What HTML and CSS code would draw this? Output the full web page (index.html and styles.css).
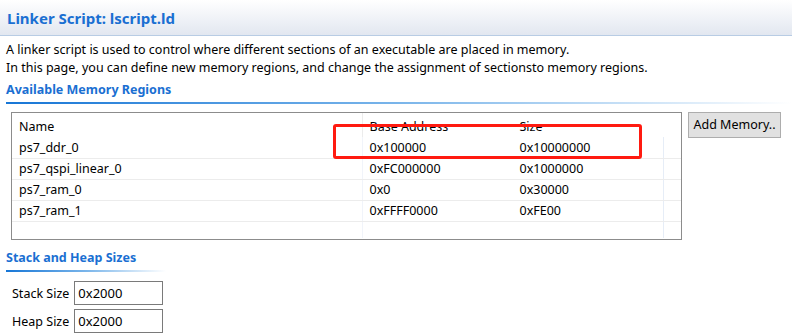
FILE: index.html
```html
<!DOCTYPE html>
<html lang="en">
<head>
    <meta charset="UTF-8">
    <title>Linker Script: lscript.ld</title>
    <link rel="stylesheet" href="styles.css">
</head>
<body>
    <div class="header">
        <h1>Linker Script: lscript.ld</h1>
    </div>

    <div class="content">
        <p class="intro">
            A linker script is used to control where different sections of an executable are placed in memory.<br>
            In this page, you can define new memory regions, and change the assignment of sectionsto memory regions.
        </p>

        <div class="section-title">Available Memory Regions</div>

        <div class="regions">
            <div class="table-wrap">
                <table class="mem-table">
                    <thead>
                        <tr>
                            <th class="col-name">Name</th>
                            <th class="col-base">Base Address</th>
                            <th class="col-size">Size</th>
                            <th class="col-rest"></th>
                        </tr>
                    </thead>
                    <tbody>
                        <tr><td>ps7_ddr_0</td><td>0x100000</td><td>0x10000000</td><td></td></tr>
                        <tr><td>ps7_qspi_linear_0</td><td>0xFC000000</td><td>0x1000000</td><td></td></tr>
                        <tr><td>ps7_ram_0</td><td>0x0</td><td>0x30000</td><td></td></tr>
                        <tr><td>ps7_ram_1</td><td>0xFFFF0000</td><td>0xFE00</td><td></td></tr>
                        <tr class="empty"><td></td><td></td><td></td><td></td></tr>
                    </tbody>
                </table>
                <div class="highlight"></div>
            </div>
            <button class="btn">Add Memory..</button>
        </div>

        <div class="section-title short">Stack and Heap Sizes</div>

        <div class="sizes">
            <label class="field">
                <span>Stack Size</span>
                <input type="text" value="0x2000">
            </label>
            <label class="field">
                <span>Heap Size</span>
                <input type="text" value="0x2000">
            </label>
        </div>
    </div>
</body>
</html>
```

FILE: styles.css
```css
:root {
    --title-color: #1a6fd2;
    --text-color: #000000;
    --border-color: #8c8c8c;
    --grid-color: #ececec;
}

* {
    margin: 0;
    padding: 0;
    box-sizing: border-box;
}

body {
    background: #ffffff;
    color: var(--text-color);
    font-family: "Noto Sans", "Open Sans", sans-serif;
    font-size: 12.5px;
    width: 792px;
    height: 335px;
    overflow: hidden;
}

.header {
    height: 36px;
    background: linear-gradient(to bottom, #ffffff 0%, #e2e7f0 100%);
    border-bottom: 1px solid #b8cce4;
    padding: 7px 0 0 7px;
}

.header h1 {
    font-size: 15px;
    font-weight: 700;
    color: var(--title-color);
    line-height: 22px;
}

.content {
    padding: 5px 0 0 6px;
}

.intro {
    line-height: 18px;
}

.section-title {
    font-weight: 700;
    color: var(--title-color);
    line-height: 18px;
    margin-top: 4px;
    padding-bottom: 3px;
}

.section-title:after {
    content: '';
    display: block;
    height: 2px;
    margin-top: 3px;
    background: linear-gradient(to right, #1776d6 0%, #7ab5ea 50%, #ffffff 100%);
}

.section-title.short {
    width: 160px;
    margin-top: 9px;
}

.regions {
    display: flex;
    align-items: flex-start;
    gap: 6px;
    margin-top: 5px;
    padding-left: 5px;
}

.table-wrap {
    position: relative;
    width: 671px;
    height: 128px;
    border: 1px solid var(--border-color);
}

.mem-table {
    border-collapse: collapse;
    width: 100%;
}

.mem-table th,
.mem-table td {
    text-align: left;
    font-weight: 400;
    padding: 0 0 0 7px;
    white-space: nowrap;
}

.mem-table th {
    height: 24px;
    padding-top: 2px;
    border-right: 1px solid var(--grid-color);
}

.mem-table td {
    height: 21px;
    border-bottom: 1px solid var(--grid-color);
    border-right: 1px solid #f1f4fa;
}

.mem-table .col-name { width: 350px; }
.mem-table .col-base { width: 150px; }
.mem-table .col-size { width: 151px; }

.mem-table th.col-size { border-right-color: transparent; }
.mem-table td:nth-child(3) { border-right-color: #e6edf7; }
.mem-table th.col-base { border-right-color: transparent; }
.mem-table td:nth-child(2) { border-right-color: transparent; }
.mem-table th:last-child,
.mem-table td:last-child { border-right: none; }

.mem-table tr.empty td {
    border-bottom: none;
    height: 17px;
}

.highlight {
    position: absolute;
    left: 321px;
    top: 11px;
    width: 309px;
    height: 35px;
    border: 3px solid #ff1a10;
    border-radius: 3px;
}

.btn {
    font-family: inherit;
    font-size: 12.5px;
    color: #000;
    background: #e1e1e1;
    border: 1px solid #adadad;
    width: 93px;
    height: 26px;
    padding: 0;
    line-height: 22px;
}

.sizes {
    display: flex;
    flex-direction: column;
    gap: 4px;
    margin-top: 6px;
    padding-left: 6px;
}

.field {
    display: flex;
    align-items: center;
    gap: 5px;
}

.field input {
    font-family: inherit;
    font-size: 13px;
    width: 89px;
    height: 24px;
    border: 1px solid #7a7a7a;
    padding: 0 3px;
    outline: none;
}
```
